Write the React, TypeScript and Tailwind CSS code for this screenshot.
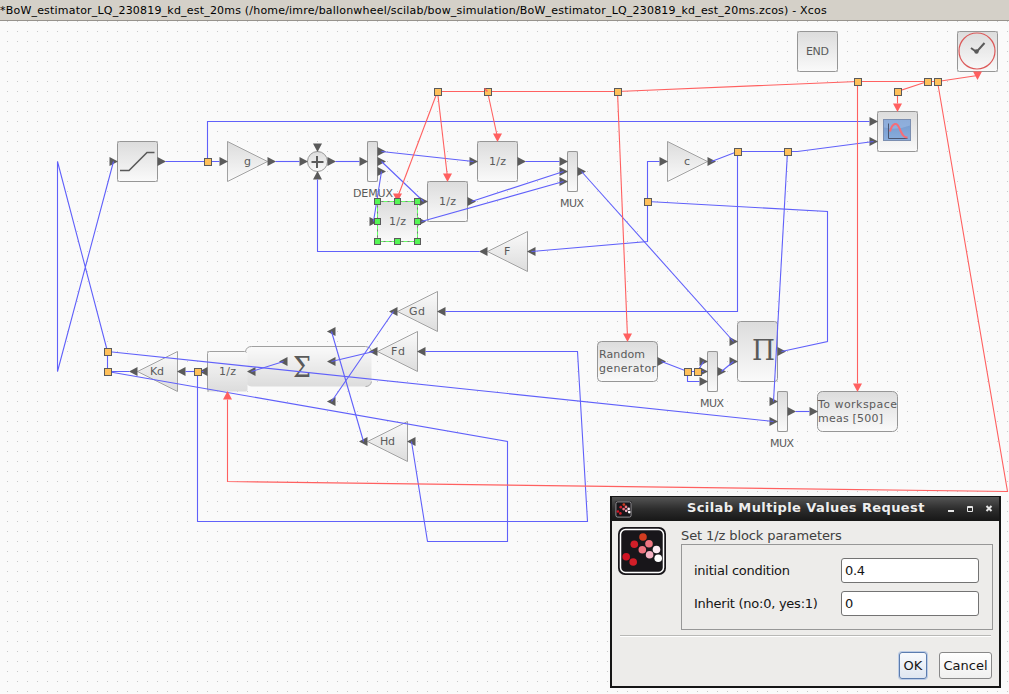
import React from "react";

type Pt = [number, number];
type Dir = "r" | "l" | "u" | "d";

const BLUE = "#6060fa";
const RED = "#ff6060";
const INK = "#5a5a5a";

const dataLinks: Pt[][] = [
  [[165, 161], [219, 161]],
  [[207, 161], [207, 121], [869, 121]],
  [[275, 161], [299, 161]],
  [[335, 161], [359, 161]],
  [[381, 151], [473, 161]],
  [[381, 161], [423, 201]],
  [[381, 171], [373, 221]],
  [[525, 161], [559, 161]],
  [[471, 201], [563, 171]],
  [[421, 221], [563, 181]],
  [[581, 171], [733, 341]],
  [[531, 251], [647, 241], [647, 161], [659, 161]],
  [[479, 251], [317, 251], [317, 179]],
  [[711, 161], [737, 151], [797, 151], [873, 141]],
  [[737, 151], [737, 311], [445, 311]],
  [[787, 151], [773, 401]],
  [[647, 201], [827, 211], [827, 341], [781, 351]],
  [[425, 351], [577, 351], [587, 521], [197, 521], [197, 371]],
  [[411, 441], [427, 541], [507, 541], [507, 441], [107, 371]],
  [[107, 351], [773, 421]],
  [[107, 351], [107, 371], [129, 371]],
  [[185, 371], [203, 371]],
  [[113, 161], [57, 371], [57, 161], [107, 351]],
  [[393, 311], [331, 401]],
  [[373, 351], [331, 361]],
  [[363, 441], [331, 331]],
  [[283, 361], [251, 371]],
  [[661, 361], [687, 371], [703, 371]],
  [[697, 371], [703, 361]],
  [[687, 371], [687, 381], [699, 381]],
  [[721, 371], [733, 361]],
  [[795, 411], [809, 411]],
];

const eventLinks: Pt[][] = [
  [[977, 75], [937, 81], [857, 81], [617, 91], [437, 91]],
  [[437, 91], [397, 197]],
  [[437, 91], [447, 177]],
  [[487, 91], [497, 137]],
  [[617, 91], [627, 337]],
  [[857, 81], [857, 383]],
  [[927, 81], [897, 91], [897, 103]],
  [[937, 81], [1007, 491], [227, 481], [227, 399]],
];

// Each port is given by the middle of its left (r, l) or top (u, d) side.
const dataPorts: [Dir, number, number][] = [
  ["r", 109, 161], ["r", 157, 161], ["r", 219, 161], ["r", 267, 161],
  ["r", 299, 161], ["r", 327, 161], ["d", 317, 143], ["u", 317, 171],
  ["r", 359, 161], ["r", 377, 151], ["r", 377, 161], ["r", 377, 171],
  ["r", 469, 161], ["r", 517, 161], ["r", 419, 201], ["r", 467, 201],
  ["r", 369, 221], ["r", 417, 221], ["r", 559, 161], ["r", 559, 171],
  ["r", 559, 181], ["r", 577, 171], ["l", 479, 251], ["l", 527, 251],
  ["r", 659, 161], ["r", 707, 161], ["r", 869, 121], ["r", 869, 141],
  ["l", 129, 371], ["l", 177, 371], ["l", 199, 371], ["l", 247, 371],
  ["l", 279, 361], ["l", 327, 331], ["l", 327, 361], ["l", 327, 401],
  ["l", 369, 351], ["l", 417, 351], ["l", 389, 311], ["l", 437, 311],
  ["l", 359, 441], ["l", 407, 441], ["r", 657, 361], ["r", 699, 361],
  ["r", 699, 371], ["r", 699, 381], ["r", 717, 371], ["r", 729, 341],
  ["r", 729, 361], ["r", 777, 351], ["r", 769, 401], ["r", 769, 421],
  ["r", 787, 411], ["r", 809, 411],
];

const eventPorts: [Dir, number, number][] = [
  ["d", 497, 133], ["d", 447, 173], ["d", 397, 193], ["d", 977, 71],
  ["d", 897, 103], ["d", 627, 333], ["d", 857, 383], ["u", 227, 391],
];

const splits: Pt[] = [
  [207, 161], [437, 91], [487, 91], [617, 91], [857, 81], [927, 81], [937, 81], [897, 91],
  [737, 151], [787, 151], [647, 201], [107, 351], [107, 371], [197, 371], [687, 371], [697, 371],
];

const handles: Pt[] = [
  [377, 201], [397, 201], [417, 201], [377, 221], [417, 221], [377, 241], [397, 241], [417, 241],
];

function Port({ dir, x, y, fill }: { dir: Dir; x: number; y: number; fill: string }) {
  const points = {
    r: `${x},${y - 4.5} ${x + 8.5},${y} ${x},${y + 4.5}`,
    l: `${x + 8},${y - 4.5} ${x - 0.5},${y} ${x + 8},${y + 4.5}`,
    d: `${x - 4.5},${y} ${x + 4.5},${y} ${x},${y + 8.5}`,
    u: `${x - 4.5},${y + 8} ${x + 4.5},${y + 8} ${x},${y - 0.5}`,
  }[dir];
  return <polygon points={points} fill={fill} />;
}

function Box({ x, y, w = 40, h = 40, r = 2 }: { x: number; y: number; w?: number; h?: number; r?: number }) {
  return <rect x={x} y={y} width={w} height={h} rx={r} fill="url(#face)" stroke="#969696" />;
}

function Gain({ base, tip, y }: { base: number; tip: number; y: number }) {
  return <polygon points={`${base},${y - 20} ${tip},${y} ${base},${y + 20}`} fill="url(#face)" stroke="#a2a2a2" />;
}

function Label({ x, y, w, children }: { x: number; y: number; w: number; children: string }) {
  return (
    <text x={x} y={y} textLength={w} lengthAdjust="spacing" fill={INK} className="font-['DejaVu_Sans',sans-serif] text-[11px]">
      {children}
    </text>
  );
}

function Diagram() {
  return (
    <svg width="1009" height="673" viewBox="0 21 1009 673" className="block">
      <defs>
        <linearGradient id="face" x1="0" y1="0" x2="0" y2="1">
          <stop offset="0" stopColor="#dcdcdc" />
          <stop offset="1" stopColor="#fafafa" />
        </linearGradient>
        <linearGradient id="faceFlipped" x1="0" y1="0" x2="0" y2="1">
          <stop offset="0" stopColor="#fafafa" />
          <stop offset="1" stopColor="#dcdcdc" />
        </linearGradient>
        <linearGradient id="screen" x1="0" y1="0" x2="0" y2="1">
          <stop offset="0" stopColor="#7197cc" />
          <stop offset="1" stopColor="#8aaedd" />
        </linearGradient>
        <pattern id="dots" x="7" y="21" width="10" height="10" patternUnits="userSpaceOnUse">
          <rect width="1" height="1" fill="#c8c8c8" />
        </pattern>
      </defs>
      <rect y="21" width="1009" height="673" fill="#fafafa" />
      <rect y="21" width="1009" height="673" fill="url(#dots)" />

      <g transform="translate(.5 .5)">
        <Box x={117} y={141} />
        <path d="M119.500 170H128.500L146.500 152H154" fill="none" stroke={INK} strokeWidth="1.600" />
        <Gain base={227} tip={267} y={161} />
        <circle cx="317" cy="161" r="10" fill="url(#face)" stroke="#969696" />
        <path d="M311 161.500H323M316.500 155.500V167.500" stroke={INK} strokeWidth="2" />
        <Box x={367} y={141} w={10} r={1.500} />
        <Box x={477} y={141} />
        <Box x={427} y={181} />
        <rect x="377" y="201" width="40" height="40" fill="url(#face)" />
        <Box x={567} y={151} w={10} r={1.500} />
        <polygon points="527,231 487,251 527,271" fill="url(#faceFlipped)" stroke="#a2a2a2" />
        <Gain base={667} tip={707} y={161} />
        <Box x={797} y={31} />
        <Box x={957} y={31} />
        <circle cx="976.500" cy="50.500" r="18" fill="none" stroke="#dc5a5a" strokeWidth="1.200" />
        <path d="M970.500 47.500L976 51.500L984 42.500" fill="none" stroke={INK} strokeWidth="2" />
        <circle cx="976" cy="51" r="2.200" fill={INK} />
        <Box x={877} y={111} />
        <rect x="883" y="119" width="27" height="21" fill="url(#screen)" stroke="#7b8eb0" />
        <path d="M883.500 119.500H909.500V125Q897 130 883.500 127Z" fill="#9fbbe2" opacity=".6" />
        <path d="M888 123V138H907" fill="none" stroke="#4a5570" />
        <path d="M889.500 131C892 122 896.500 121 899 128C902 135 903.500 137 907 137" fill="none" stroke="#f66d78" strokeWidth="2" />

        <rect x="245" y="346" width="126" height="40" rx="6" fill="url(#faceFlipped)" />
        <path d="M245 351Q246 346 251 346H365Q370 346 371 350" fill="none" stroke="#a0a0a0" />
        <path d="M371 381Q370 386 365 386" fill="none" stroke="#a8a8a8" />
        <rect x="207" y="351" width="40" height="40" rx="2" fill="url(#faceFlipped)" />
        <path d="M246 352Q246 351 244 351H209Q207 351 207 353V389L208 391" fill="none" stroke="#a0a0a0" />
        <polygon points="177,351 137,371 177,391" fill="url(#faceFlipped)" stroke="#a2a2a2" />
        <polygon points="417,331 377,351 417,371" fill="url(#faceFlipped)" stroke="#a2a2a2" />
        <polygon points="437,291 397,311 437,331" fill="url(#faceFlipped)" stroke="#a2a2a2" />
        <polygon points="407,421 367,441 407,461" fill="url(#faceFlipped)" stroke="#a2a2a2" />

        <Box x={597} y={341} w={60} r={4} />
        <Box x={707} y={351} w={10} r={1.500} />
        <Box x={737} y={321} h={60} r={3} />
        <Box x={777} y={391} w={10} r={1.500} />
        <Box x={817} y={391} w={80} r={5} />
      </g>

      <Label x={244} y={165} w={7}>g</Label>
      <Label x={489} y={165} w={17}>1/z</Label>
      <Label x={439} y={205} w={17}>1/z</Label>
      <Label x={389} y={225} w={17}>1/z</Label>
      <Label x={219} y={375} w={17}>1/z</Label>
      <Label x={353} y={197} w={40}>DEMUX</Label>
      <Label x={560} y={207} w={24}>MUX</Label>
      <Label x={700} y={407} w={24}>MUX</Label>
      <Label x={770} y={447} w={24}>MUX</Label>
      <Label x={504} y={255} w={7}>F</Label>
      <Label x={684} y={165} w={6}>c</Label>
      <Label x={806} y={55} w={23}>END</Label>
      <Label x={150} y={375} w={14}>Kd</Label>
      <Label x={391} y={355} w={14}>Fd</Label>
      <Label x={409} y={315} w={16}>Gd</Label>
      <Label x={380} y={445} w={15}>Hd</Label>
      <Label x={599} y={358} w={46}>Random</Label>
      <Label x={599} y={372} w={57}>generator</Label>
      <Label x={818} y={408} w={79}>To workspace</Label>
      <Label x={818} y={422} w={65}>meas [500]</Label>
      <text x="293" y="377" textLength="18" lengthAdjust="spacingAndGlyphs" fill={INK} className="font-['DejaVu_Serif',serif] text-[27px]">Σ</text>
      <text x="752" y="360" textLength="23" lengthAdjust="spacingAndGlyphs" fill={INK} className="font-['DejaVu_Serif',serif] text-[27px]">Π</text>

      <g transform="translate(.5 .5)" fill="none">
        {dataPorts.map(([dir, x, y], i) => (
          <Port key={i} dir={dir} x={x} y={y} fill={INK} />
        ))}
        {dataLinks.map((l, i) => (
          <polyline key={i} points={l.join(" ")} stroke={BLUE} strokeWidth="1.100" />
        ))}
        {eventLinks.map((l, i) => (
          <polyline key={i} points={l.join(" ")} stroke={RED} strokeWidth="1.100" />
        ))}
        {eventPorts.map(([dir, x, y], i) => (
          <Port key={i} dir={dir} x={x} y={y} fill={RED} />
        ))}
        {splits.map(([x, y], i) => (
          <rect key={i} x={x - 3} y={y - 3} width="7" height="7" fill="#ffc05a" stroke={INK} />
        ))}
        <path d="M484 88L487 91" stroke={RED} strokeWidth="1.500" />
        <rect x="377" y="201" width="40" height="40" stroke="#7a7a7a" />
        <rect x="377" y="201" width="40" height="40" stroke="#64ff64" strokeDasharray="4 2" />
        {handles.map(([x, y], i) => (
          <rect key={i} x={x - 3} y={y - 3} width="6" height="6" fill="#55f555" stroke={INK} />
        ))}
      </g>
    </svg>
  );
}

function ScilabLogo({ size }: { size: number }) {
  return (
    <svg width={size} height={size} viewBox="0 0 48 48" className="block">
      <rect width="48" height="48" rx="7" fill="#18161a" />
      <rect x="2.500" y="2.500" width="43" height="43" rx="5" fill="none" stroke="#fff" strokeWidth="1.500" />
      <g>
        <circle cx="25" cy="10" r="3.800" fill="#d23c20" />
        <circle cx="16.300" cy="17.300" r="3.800" fill="#d21e28" />
        <circle cx="31" cy="16.700" r="3.800" fill="#ef7480" />
        <circle cx="24.300" cy="22.700" r="3.800" fill="#ef7480" />
        <circle cx="38.500" cy="22.500" r="3.800" fill="#fdeaf2" />
        <circle cx="31.600" cy="27.700" r="3.800" fill="#f5b0c2" />
        <circle cx="40.200" cy="31.300" r="3.800" fill="#fff" />
        <circle cx="8.200" cy="29.700" r="3.800" fill="#cf1424" />
        <circle cx="15.200" cy="35" r="3.800" fill="#d21e28" />
      </g>
    </svg>
  );
}

function Field({ label, value }: { label: string; value: string }) {
  return (
    <div className="flex h-[25px] items-center">
      <span className="w-[147px] whitespace-pre tracking-[-0.25px]">{label}</span>
      <span className="flex h-[25px] w-[138px] items-center rounded-[3px] border border-[#737373] bg-white pl-[3px] tracking-[-0.3px]">{value}</span>
    </div>
  );
}

function Dialog() {
  return (
    <div className="absolute left-[610px] top-[496px] flex h-[192px] w-[391px] flex-col border-2 border-t-0 border-[#151515] bg-[#edecea] text-[13px] leading-4 text-[#141414]">
      <div className="flex h-[25px] items-center border-t border-[#151515] bg-gradient-to-b from-[#555555] via-[#2d2d2d] to-[#171717] pl-[3px] text-[#eeeeee]">
        <ScilabLogo size={17} />
        <span className="-mt-[3px] ml-[55px] w-[240px] whitespace-nowrap font-bold tracking-[0.39px]">Scilab Multiple Values Request</span>
        <svg width="50" height="10" viewBox="0 0 50 10" className="ml-[19px]" fill="none" stroke="#e6e6e6">
          <path d="M2 7H8" strokeWidth="2" />
          <path d="M21.500 2.500H26.500V7.500H21.500ZM21.500 3.500H26.500" />
          <path d="M40.500 2L45.500 7M45.500 2L40.500 7" strokeWidth="2" />
        </svg>
      </div>
      <div className="flex h-[109px] pl-[6px] pt-[6px]">
        <ScilabLogo size={48} />
        <div className="ml-[15px] flex flex-col text-[#404040]">
          <span className="h-[17px] pt-px tracking-[-0.1px]">Set 1/z block parameters</span>
          <div className="flex h-[86px] w-[312px] flex-col gap-[8px] border border-[#979797] pl-[12px] pt-[13px] text-[#141414]">
            <Field label="initial condition" value="0.4" />
            <Field label="Inherit (no:0, yes:1)" value="0" />
          </div>
        </div>
      </div>
      <div className="ml-[8px] mt-[5px] h-[2px] w-[371px] border-b border-t border-b-white border-t-[#b8b8b6]" />
      <div className="mt-[15px] flex gap-[12px] pl-[287px]">
        <div className="flex h-[27px] w-[28px] items-center justify-center rounded-[3px] border border-[#5b7caf] bg-gradient-to-b from-[#f8fafd] to-[#dfe6f1] shadow-[0_0_0_1px_#bccce6]">OK</div>
        <div className="flex h-[27px] w-[53px] items-center justify-center rounded-[3px] border border-[#888888] bg-gradient-to-b from-white to-[#f0f0ef]">Cancel</div>
      </div>
    </div>
  );
}

export default function App() {
  return (
    <div className="relative h-[694px] w-[1009px] overflow-hidden bg-[#fafafa] font-['DejaVu_Sans',sans-serif]">
      <header className="flex h-[21px] items-center border-b border-[#96928c] bg-[#d4d0c8] text-[11px] leading-none text-black">
        <span className="whitespace-nowrap tracking-[0.2px]">*BoW_estimator_LQ_230819_kd_est_20ms (/home/imre/ballonwheel/scilab/bow_simulation/BoW_estimator_LQ_230819_kd_est_20ms.zcos) - Xcos</span>
      </header>
      <Diagram />
      <Dialog />
    </div>
  );
}
